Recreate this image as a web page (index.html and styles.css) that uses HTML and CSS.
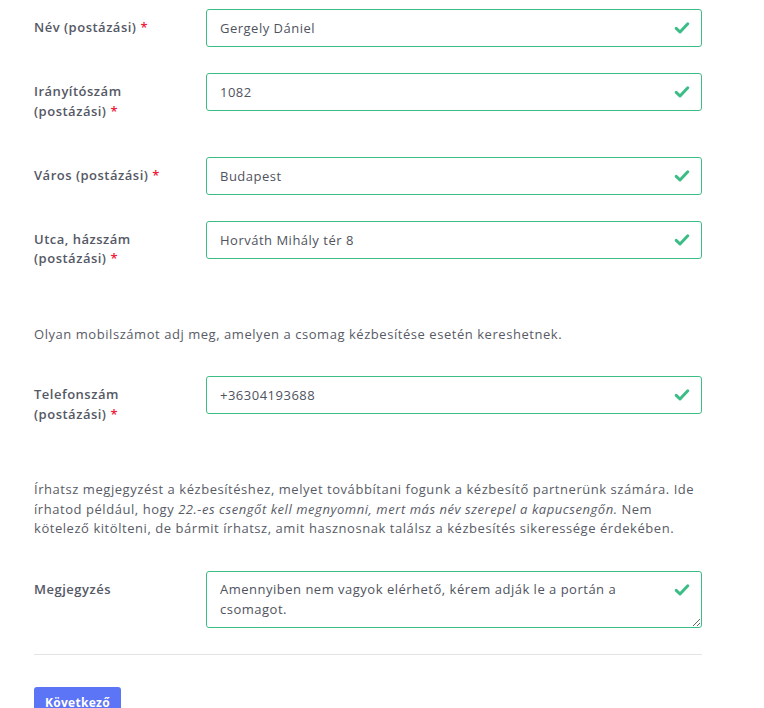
FILE: index.html
```html
<!DOCTYPE html>
<html lang="hu">
<head>
<meta charset="utf-8">
<title>Szállítási adatok</title>
<link rel="stylesheet" href="styles.css">
</head>
<body>
<form class="form">
  <div class="row">
    <label class="label" for="nev">Név (postázási) <span class="req">*</span></label>
    <div class="field">
      <input class="input" id="nev" type="text" value="Gergely Dániel">
      <svg class="check" viewBox="0 0 16 14" width="16" height="14"><polyline points="2.2,7.4 6,11 13.8,2.8" fill="none" stroke="#3dbd86" stroke-width="3" stroke-linecap="round" stroke-linejoin="round"/></svg>
    </div>
  </div>
  <div class="row">
    <label class="label" for="irsz">Irányítószám<br>(postázási) <span class="req">*</span></label>
    <div class="field">
      <input class="input" id="irsz" type="text" value="1082">
      <svg class="check" viewBox="0 0 16 14" width="16" height="14"><polyline points="2.2,7.4 6,11 13.8,2.8" fill="none" stroke="#3dbd86" stroke-width="3" stroke-linecap="round" stroke-linejoin="round"/></svg>
    </div>
  </div>
  <div class="row">
    <label class="label" for="varos">Város (postázási) <span class="req">*</span></label>
    <div class="field">
      <input class="input" id="varos" type="text" value="Budapest">
      <svg class="check" viewBox="0 0 16 14" width="16" height="14"><polyline points="2.2,7.4 6,11 13.8,2.8" fill="none" stroke="#3dbd86" stroke-width="3" stroke-linecap="round" stroke-linejoin="round"/></svg>
    </div>
  </div>
  <div class="row">
    <label class="label" for="utca">Utca, házszám<br>(postázási) <span class="req">*</span></label>
    <div class="field">
      <input class="input" id="utca" type="text" value="Horváth Mihály tér 8">
      <svg class="check" viewBox="0 0 16 14" width="16" height="14"><polyline points="2.2,7.4 6,11 13.8,2.8" fill="none" stroke="#3dbd86" stroke-width="3" stroke-linecap="round" stroke-linejoin="round"/></svg>
    </div>
  </div>

  <p class="help">Olyan mobilszámot adj meg, amelyen a csomag kézbesítése esetén kereshetnek.</p>

  <div class="row">
    <label class="label" for="tel">Telefonszám<br>(postázási) <span class="req">*</span></label>
    <div class="field">
      <input class="input" id="tel" type="text" value="+36304193688">
      <svg class="check" viewBox="0 0 16 14" width="16" height="14"><polyline points="2.2,7.4 6,11 13.8,2.8" fill="none" stroke="#3dbd86" stroke-width="3" stroke-linecap="round" stroke-linejoin="round"/></svg>
    </div>
  </div>

  <p class="help">Írhatsz megjegyzést a kézbesítéshez, melyet továbbítani fogunk a kézbesítő partnerünk számára. Ide<br>írhatod például, hogy <em>22.-es csengőt kell megnyomni, mert más név szerepel a kapucsengőn.</em> Nem<br>kötelező kitölteni, de bármit írhatsz, amit hasznosnak találsz a kézbesítés sikeressége érdekében.</p>

  <div class="row">
    <label class="label" for="megj">Megjegyzés</label>
    <div class="field">
      <textarea class="input textarea" id="megj">Amennyiben nem vagyok elérhető, kérem adják le a portán a
csomagot.</textarea>
      <svg class="check" viewBox="0 0 16 14" width="16" height="14"><polyline points="2.2,7.4 6,11 13.8,2.8" fill="none" stroke="#3dbd86" stroke-width="3" stroke-linecap="round" stroke-linejoin="round"/></svg>
    </div>
  </div>

  <hr class="divider">

  <button class="btn" type="button">Következő</button>
</form>
</body>
</html>
```

FILE: styles.css
```css
html, body {
  margin: 0;
  padding: 0;
  background: #ffffff;
}

body {
  font-family: "Open Sans", "DejaVu Sans", sans-serif;
  font-size: 13px;
  letter-spacing: 0.5px;
  color: #535763;
}

.form {
  width: 668px;
  padding: 9px 0 0 34px;
}

.row {
  display: grid;
  grid-template-columns: 172px 496px;
  align-items: start;
  margin-bottom: 26px;
}

.label {
  padding: 9px 0 9.5px 0;
  font-size: 13px;
  font-weight: 600;
  line-height: 19.5px;
  color: #555865;
}

.req {
  color: #f0203a;
}

.field {
  position: relative;
}

.input {
  display: block;
  box-sizing: border-box;
  width: 496px;
  height: 38px;
  margin: 0;
  padding: 0 40px 0 13px;
  border: 1px solid #3dbd86;
  border-radius: 3px;
  background: #ffffff;
  font-family: inherit;
  font-size: 13px;
  letter-spacing: 0.5px;
  line-height: 19.5px;
  color: #4f535e;
  outline: none;
}

.textarea {
  height: 57px;
  padding: 8.5px 40px 8.5px 13px;
  resize: vertical;
  overflow: hidden;
}

.check {
  position: absolute;
  top: 12px;
  right: 12px;
}

.help {
  margin: 46.5px 0 32px 0;
  font-size: 13px;
  line-height: 19.5px;
  letter-spacing: 0.55px;
  color: #585b66;
}

.help em {
  font-style: italic;
}

.divider {
  margin: 0;
  border: 0;
  border-top: 1px solid #e4e4e7;
}

.btn {
  margin-top: 32px;
  width: 87px;
  height: 32px;
  padding: 0;
  border: 0;
  border-radius: 3px;
  background: #5c74f6;
  color: #ffffff;
  font-family: inherit;
  font-size: 12px;
  font-weight: 700;
  letter-spacing: 0.3px;
}
```
